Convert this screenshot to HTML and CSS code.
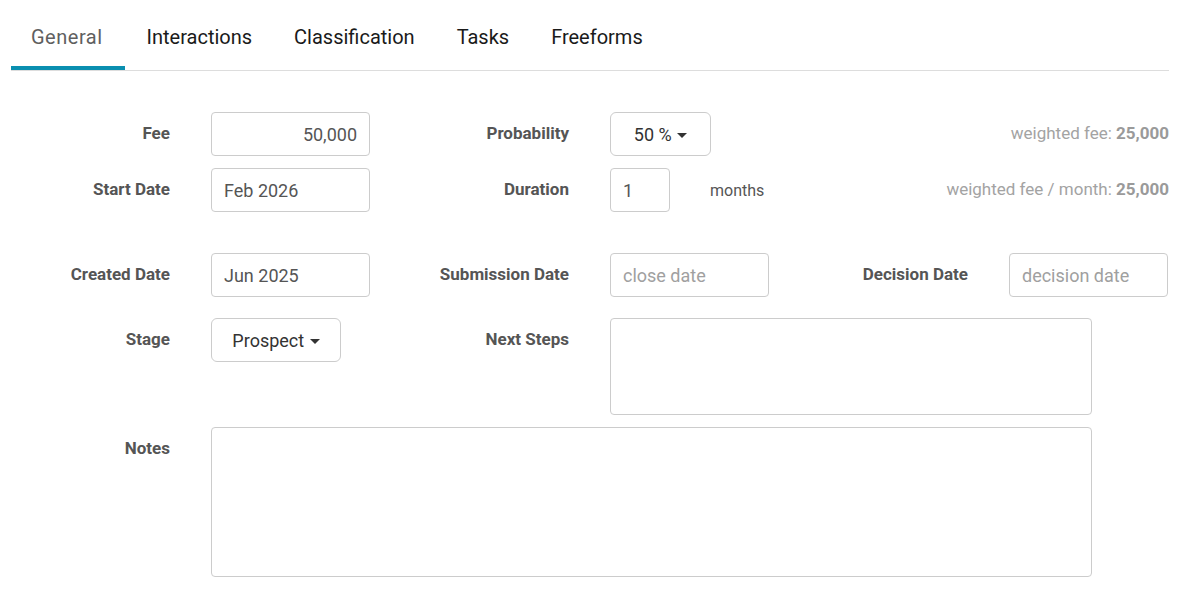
FILE: index.html
```html
<!DOCTYPE html>
<html>
<head>
    <meta charset="utf-8">
    <meta name="viewport" content="width=device-width, initial-scale=1">
    <title>Opportunity</title>
    <link rel="stylesheet" href="styles.css">
</head>
<body>
    <div class="page">
        <ul class="tabs">
            <li class="tab active">General</li>
            <li class="tab">Interactions</li>
            <li class="tab">Classification</li>
            <li class="tab">Tasks</li>
            <li class="tab">Freeforms</li>
        </ul>

        <div class="form">
            <!-- fee / probability -->
            <div class="row">
                <label class="lbl">Fee</label>
                <div class="cell"><input class="inp num" value="50,000"></div>
                <label class="lbl">Probability</label>
                <div class="cell"><button class="drop drop-prob">50 % <span class="caret"></span></button></div>
                <div class="info">weighted fee: <b>25,000</b></div>
            </div>
            <div class="row">
                <label class="lbl">Start Date</label>
                <div class="cell"><input class="inp" value="Feb 2026"></div>
                <label class="lbl">Duration</label>
                <div class="cell"><input class="inp inp-short" value="1"><span class="unit">months</span></div>
                <div class="info">weighted fee / month: <b>25,000</b></div>
            </div>

            <!-- dates -->
            <div class="row row-sep">
                <label class="lbl">Created Date</label>
                <div class="cell"><input class="inp" value="Jun 2025"></div>
                <label class="lbl">Submission Date</label>
                <div class="cell"><input class="inp" placeholder="close date"></div>
                <label class="lbl">Decision Date</label>
                <div class="cell"><input class="inp" placeholder="decision date"></div>
            </div>
            <div class="row row-mid">
                <label class="lbl">Stage</label>
                <div class="cell"><button class="drop drop-stage">Prospect <span class="caret"></span></button></div>
                <label class="lbl">Next Steps</label>
                <div class="cell cell-wide"><textarea class="area area-steps"></textarea></div>
            </div>
            <div class="row">
                <label class="lbl">Notes</label>
                <div class="cell cell-notes"><textarea class="area area-notes"></textarea></div>
            </div>
        </div>
    </div>
</body>
</html>
```

FILE: styles.css
```css
body {
    margin: 0;
    background: #fff;
    font-family: Roboto, "Liberation Sans", sans-serif;
    color: #555;
}
.page {
    padding: 0 15px 0 11px;
}
.tabs {
    display: flex;
    margin: 0;
    padding: 0;
    list-style: none;
    border-bottom: 1px solid #ddd;
    height: 70px;
}
.tab {
    padding: 25px 20px 0 20px;
    margin-right: 2px;
    font-size: 20px;
    color: #1a1a1a;
}
.tab.active {
    padding: 25px 22px 0 20px;
    letter-spacing: 0.5px;
    color: #5f5f5f;
    border-bottom: 4px solid #0a8fb0;
    height: 41px;
}
.form {
    padding-top: 41px;
}
.row {
    display: grid;
    grid-template-columns: 200px 199px 200px 199px 200px 159px;
    align-items: start;
    margin-bottom: 12px;
}
.row-sep {
    margin-top: 41px;
}
.row-mid {
    margin-top: 21px;
}
.lbl {
    padding-right: 41px;
    text-align: right;
    font-weight: bold;
    font-size: 17px;
    line-height: 43px;
    color: #555;
}
.cell {
    display: flex;
    align-items: center;
    height: 44px;
}
.cell-wide {
    grid-column: 4 / 7;
    height: auto;
}
.cell-notes {
    grid-column: 2 / 7;
    height: auto;
}
.inp {
    box-sizing: border-box;
    width: 159px;
    height: 44px;
    border: 1px solid #ccc;
    border-radius: 4px;
    padding: 0 12px;
    font-family: inherit;
    font-size: 18px;
    color: #555;
    outline: none;
}
.inp::placeholder {
    color: #a0a0a0;
}
.num {
    text-align: right;
}
.inp-short {
    width: 60px;
}
.unit {
    margin-left: 40px;
    font-size: 16px;
    color: #555;
}
.drop {
    box-sizing: border-box;
    height: 44px;
    background: #fff;
    border: 1px solid #ccc;
    border-radius: 6px;
    font-family: inherit;
    font-size: 18px;
    color: #333;
    padding: 0;
    text-align: center;
}
.drop-prob {
    width: 101px;
}
.drop-stage {
    width: 130px;
}
.caret {
    display: inline-block;
    width: 0;
    height: 0;
    margin-left: 1px;
    vertical-align: middle;
    border-top: 5px solid #333;
    border-left: 5px solid transparent;
    border-right: 5px solid transparent;
}
.info {
    grid-column: 5 / 7;
    text-align: right;
    line-height: 43px;
    font-size: 17px;
    color: #a3a3a3;
    margin-right: -1px;
}
.info b {
    color: #9a9a9a;
}
.area {
    box-sizing: border-box;
    border: 1px solid #ccc;
    border-radius: 4px;
    resize: none;
    font-family: inherit;
    outline: none;
}
.area-steps {
    width: 482px;
    height: 97px;
}
.area-notes {
    width: 881px;
    height: 150px;
}
```
